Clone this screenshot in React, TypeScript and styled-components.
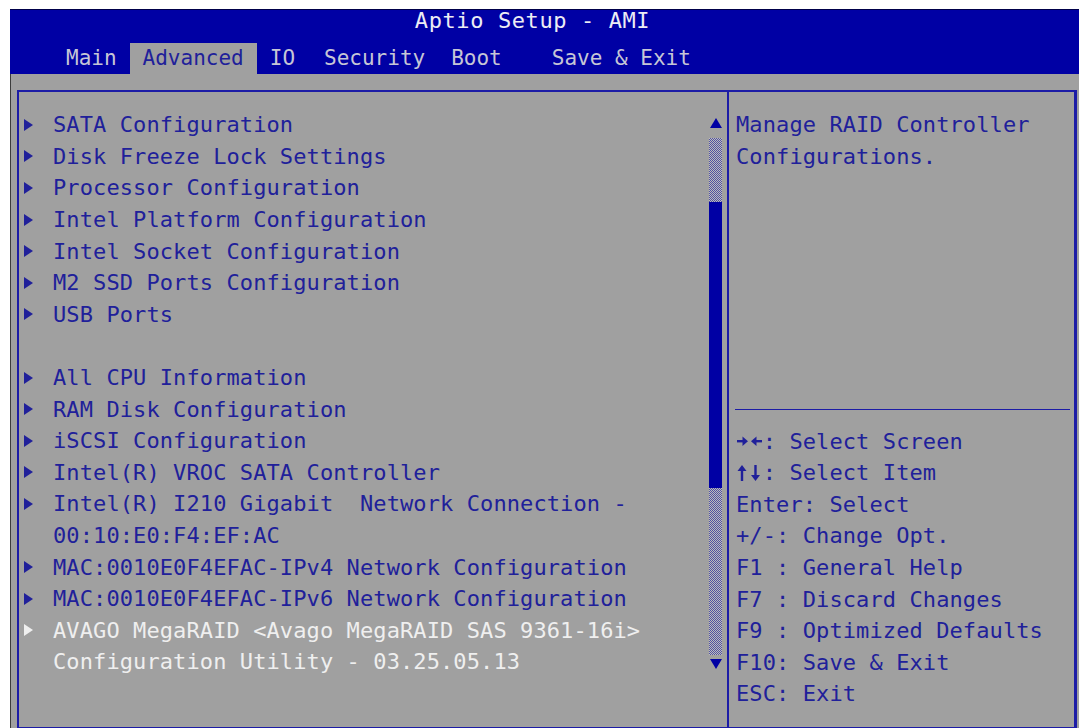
import React from 'react'
import styled, { createGlobalStyle } from 'styled-components'

const BLUE = '#0000a4'
const INK = '#20209a'
const GREY = '#a0a0a0'
const LINE = '#1c1ca6'
const ROW = '31.6px'

const GlobalStyle = createGlobalStyle`
  html, body {
    margin: 0;
    background: #fff;
    overflow: hidden;
  }
  body {
    font-family: "DejaVu Sans Mono", "Liberation Mono", monospace;
  }
`

const Frame = styled.div`
  margin: 9px 0 0 10px;
  width: 1069px;
  height: 719px;
  display: flex;
  flex-direction: column;
`

const Header = styled.header`
  height: 65px;
  box-sizing: border-box;
  background: ${BLUE};
  border-top: 1px solid #00004a;
  display: flex;
  flex-direction: column;
  font-size: 21px;
`

const Title = styled.div`
  height: 33px;
  line-height: 22px;
  font-size: 22px;
  letter-spacing: 0.6px;
  text-align: center;
  padding-right: 24px;
  color: #ececf4;
  white-space: pre;
`

const TabBar = styled.nav`
  height: 31px;
  display: flex;
  padding-left: 43px;
`

const Tab = styled.span<{ $active?: boolean; $lead?: number }>`
  padding: 0 13px;
  margin-left: ${p => p.$lead || 0}px;
  line-height: 31px;
  white-space: pre;
  color: ${p => (p.$active ? INK : '#c6c6d6')};
  background: ${p => (p.$active ? GREY : 'transparent')};
`

const Panel = styled.main`
  flex: 1;
  display: flex;
  background: ${GREY};
  border-left: 1px solid #3c3c3c;
  padding: 16px 2px 0 6px;
  font-size: 22px;
  letter-spacing: 0.1px;
`

const Box = styled.section`
  flex: 1;
  display: grid;
  grid-template-columns: 708px 1fr;
  border: 2px solid ${LINE};
  border-right-width: 3px;
  border-bottom-width: 1px;
`

const MainCol = styled.div`
  display: flex;
  padding-right: 5px;
`

const MenuList = styled.ul`
  flex: 1;
  list-style: none;
  margin: 0;
  padding: 17px 0 0 5px;
`

const Row = styled.li<{ $selected?: boolean }>`
  display: flex;
  align-items: center;
  height: ${ROW};
  white-space: pre;
  color: ${p => (p.$selected ? '#efefef' : INK)};
`

const Marker = styled.span`
  width: 29px;
  flex: none;
  display: flex;
  align-items: center;
`

const Arrow = styled.i`
  width: 0;
  height: 0;
  border-left: 9px solid currentColor;
  border-top: 6px solid transparent;
  border-bottom: 6px solid transparent;
`

const Scroll = styled.div`
  width: 13px;
  display: flex;
  flex-direction: column;
  align-items: center;
  padding-top: 26px;
`

const ScrollArrow = styled.i<{ $down?: boolean }>`
  width: 0;
  height: 0;
  border-left: 6px solid transparent;
  border-right: 6px solid transparent;
  ${p =>
    p.$down
      ? `border-top: 10px solid ${BLUE}; margin-top: 4px;`
      : `border-bottom: 10px solid ${BLUE}; margin-bottom: 10px;`}
`

const Track = styled.div`
  width: 13px;
  height: 517px;
  display: flex;
  flex-direction: column;
`

const Stipple = styled.div<{ $h?: number }>`
  ${p => (p.$h ? `height: ${p.$h}px;` : 'flex: 1;')}
  background: repeating-conic-gradient(#5252a2 0 25%, #bdbdbd 0 50%) 0 0 / 2px 2px;
`

const Thumb = styled.div`
  height: 286px;
  background: ${BLUE};
`

const SideCol = styled.aside`
  border-left: 2px solid ${LINE};
  padding-left: 7px;
  display: flex;
  flex-direction: column;
  color: ${INK};
`

const HelpText = styled.div`
  padding-top: 17px;
`

const Line = styled.div`
  height: ${ROW};
  display: flex;
  align-items: center;
  white-space: pre;
`

const Keys = styled.div`
  margin: auto 4px 0 -1px;
  border-top: 1px solid ${LINE};
  padding: 15.2px 0 17.4px 1px;
`

const GlyphBox = styled.svg`
  flex: none;
  width: 26.7px;
  height: 18px;
`

// bold key arrows used by the legend: "→←" and "↑↓"
const KeyArrows = ({ dir }: { dir: 'h' | 'v' }) => (
  <GlyphBox viewBox="0 0 26.7 18" fill="currentColor">
    {dir === 'h' ? (
      <>
        <rect x="1" y="8" width="7" height="2.4" />
        <path d="M6.5 4.5 L12 9.2 L6.5 13.9 Z" />
        <rect x="19" y="8" width="7" height="2.4" />
        <path d="M20.5 4.5 L15 9.2 L20.5 13.9 Z" />
      </>
    ) : (
      <>
        <rect x="4.8" y="6" width="2.4" height="11" />
        <path d="M1.5 7 L6 1 L10.5 7 Z" />
        <rect x="18.3" y="1" width="2.4" height="11" />
        <path d="M15 11 L19.5 17 L24 11 Z" />
      </>
    )}
  </GlyphBox>
)

const tabs = [
  { label: 'Main', lead: 0 },
  { label: 'Advanced', lead: 0, active: true },
  { label: 'IO', lead: 0 },
  { label: 'Security', lead: 3 },
  { label: 'Boot', lead: 0 },
  { label: 'Save & Exit', lead: 24 },
]

type Item = { text: string; arrow?: boolean; selected?: boolean }

const items: Item[] = [
  { text: 'SATA Configuration', arrow: true },
  { text: 'Disk Freeze Lock Settings', arrow: true },
  { text: 'Processor Configuration', arrow: true },
  { text: 'Intel Platform Configuration', arrow: true },
  { text: 'Intel Socket Configuration', arrow: true },
  { text: 'M2 SSD Ports Configuration', arrow: true },
  { text: 'USB Ports', arrow: true },
  { text: '' },
  { text: 'All CPU Information', arrow: true },
  { text: 'RAM Disk Configuration', arrow: true },
  { text: 'iSCSI Configuration', arrow: true },
  { text: 'Intel(R) VROC SATA Controller', arrow: true },
  { text: 'Intel(R) I210 Gigabit  Network Connection -', arrow: true },
  { text: '00:10:E0:F4:EF:AC' },
  { text: 'MAC:0010E0F4EFAC-IPv4 Network Configuration', arrow: true },
  { text: 'MAC:0010E0F4EFAC-IPv6 Network Configuration', arrow: true },
  { text: 'AVAGO MegaRAID <Avago MegaRAID SAS 9361-16i>', arrow: true, selected: true },
  { text: 'Configuration Utility - 03.25.05.13', selected: true },
]

const keys: { glyph?: 'h' | 'v'; text: string }[] = [
  { glyph: 'h', text: ': Select Screen' },
  { glyph: 'v', text: ': Select Item' },
  { text: 'Enter: Select' },
  { text: '+/-: Change Opt.' },
  { text: 'F1 : General Help' },
  { text: 'F7 : Discard Changes' },
  { text: 'F9 : Optimized Defaults' },
  { text: 'F10: Save & Exit' },
  { text: 'ESC: Exit' },
]

export default function App() {
  return (
    <>
      <GlobalStyle />
      <Frame>
        <Header>
          <Title>Aptio Setup - AMI</Title>
          <TabBar>
            {tabs.map(t => (
              <Tab key={t.label} $active={t.active} $lead={t.lead}>
                {t.label}
              </Tab>
            ))}
          </TabBar>
        </Header>
        <Panel>
          <Box>
            <MainCol>
              <MenuList>
                {items.map((it, i) => (
                  <Row key={i} $selected={it.selected}>
                    <Marker>{it.arrow && <Arrow />}</Marker>
                    {it.text}
                  </Row>
                ))}
              </MenuList>
              <Scroll>
                <ScrollArrow />
                <Track>
                  <Stipple $h={64} />
                  <Thumb />
                  <Stipple />
                </Track>
                <ScrollArrow $down />
              </Scroll>
            </MainCol>
            <SideCol>
              <HelpText>
                <Line>Manage RAID Controller</Line>
                <Line>Configurations.</Line>
              </HelpText>
              <Keys>
                {keys.map(k => (
                  <Line key={k.text}>
                    {k.glyph && <KeyArrows dir={k.glyph} />}
                    {k.text}
                  </Line>
                ))}
              </Keys>
            </SideCol>
          </Box>
        </Panel>
      </Frame>
    </>
  )
}
